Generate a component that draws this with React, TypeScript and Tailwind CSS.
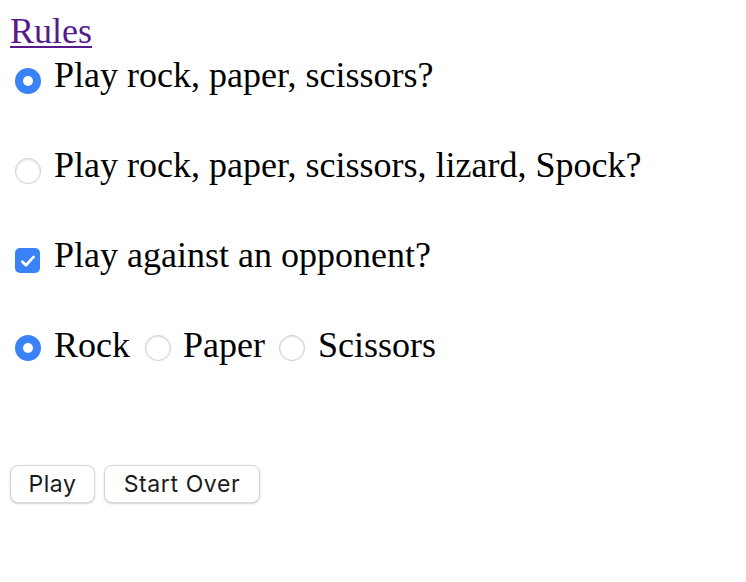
import React from 'react';

function Radio({ checked }: { checked?: boolean }) {
  return checked ? (
    <span className="flex h-[26px] w-[26px] shrink-0 items-center justify-center rounded-full bg-[#3a82f7]">
      <span className="block h-[10px] w-[10px] rounded-full bg-white" />
    </span>
  ) : (
    <span className="block h-[26px] w-[26px] shrink-0 rounded-full border border-[#d4d4d4] bg-white shadow-[inset_0_1px_2px_rgba(0,0,0,0.12),0_0_1px_rgba(0,0,0,0.1)]" />
  );
}

function Checkbox() {
  return (
    <span className="flex h-[25px] w-[25px] shrink-0 items-center justify-center rounded-[5px] bg-[#3a82f7]">
      <svg width="18" height="18" viewBox="0 0 16 16" fill="none">
        <path d="M3 8.6l3.2 3.2L13 4.4" stroke="white" strokeWidth="2.4" strokeLinecap="round" strokeLinejoin="round" />
      </svg>
    </span>
  );
}

function Row({ children }: { children: React.ReactNode }) {
  return <div className="flex h-[41px] items-start">{children}</div>;
}

export default function App() {
  return (
    <div className="min-h-[582px] bg-white pl-[10px] pt-[11px] font-['Liberation_Serif',serif] text-[36px] leading-[41px] text-black">
      <div className="h-[41px]">
        <a href="#" className="text-[#551a8b] underline underline-offset-[3px] decoration-[2px]">
          Rules
        </a>
      </div>

      <div className="mt-[3px] flex flex-col gap-[49px]">
        <Row>
          <span className="ml-[5px] mr-[13px] mt-[13px]"><Radio checked /></span>
          <span>Play rock, paper, scissors?</span>
        </Row>
        <Row>
          <span className="ml-[5px] mr-[13px] mt-[13px]"><Radio /></span>
          <span>Play rock, paper, scissors, lizard, Spock?</span>
        </Row>
        <Row>
          <span className="ml-[5px] mr-[14px] mt-[13px]"><Checkbox /></span>
          <span>Play against an opponent?</span>
        </Row>
        <Row>
          <span className="ml-[5px] mr-[13px] mt-[10px]"><Radio checked /></span>
          <span>Rock</span>
          <span className="ml-[15px] mr-[12px] mt-[10px]"><Radio /></span>
          <span>Paper</span>
          <span className="ml-[14px] mr-[13px] mt-[10px]"><Radio /></span>
          <span>Scissors</span>
        </Row>
      </div>

      <div className="mt-[99px] flex gap-[9px] font-['Inter',sans-serif] text-[23px] leading-none text-[#1c1c1c]">
        <button className="flex h-[38px] w-[85px] items-center justify-center rounded-[8px] border border-[#d6d6d6] bg-white tracking-[0.6px] shadow-[0_1px_2px_rgba(0,0,0,0.18)]">
          Play
        </button>
        <button className="flex h-[38px] w-[156px] items-center justify-center rounded-[8px] border border-[#d6d6d6] bg-white tracking-[0.6px] shadow-[0_1px_2px_rgba(0,0,0,0.18)]">
          Start Over
        </button>
      </div>
    </div>
  );
}
